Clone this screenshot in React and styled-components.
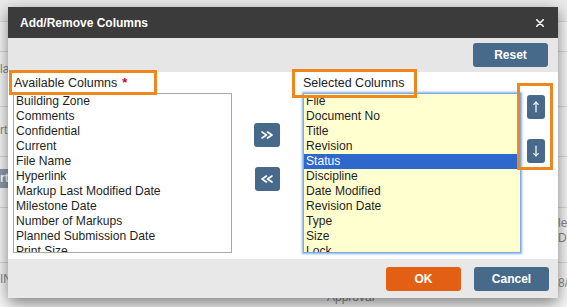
import React from 'react';
import styled, { createGlobalStyle } from 'styled-components';

const Global = createGlobalStyle`
  html, body { margin: 0; padding: 0; width: 567px; height: 307px; overflow: hidden; }
  body { font-family: "Liberation Sans", Arial, Helvetica, sans-serif; background: #f8f8f8; }
  * { box-sizing: border-box; }
`;

const Screen = styled.div`
  position: relative;
  width: 567px;
  height: 307px;
  overflow: hidden;
`;

/* ---------- background page (table behind the dialog) ---------- */
const BgRow = styled.div`
  display: grid;
  grid-template-columns: 300px 258px 1fr;
  height: ${p => p.$h}px;
  background: ${p => p.$bg || 'transparent'};
  border-bottom: ${p => (p.$line ? '1px solid #dadada' : 'none')};
  font-size: 12px;
  line-height: 15px;
  color: #8a8a8a;
  white-space: nowrap;
  overflow: hidden;
`;

const BgCell = styled.div`
  padding-top: ${p => p.$pt || 0}px;
  padding-left: ${p => p.$pl || 0}px;
  overflow: hidden;
`;

const BgBadge = styled.div`
  margin-top: 1px;
  height: 19px;
  width: 40px;
  background: #8d9cae;
  color: #fff;
  font-weight: bold;
  line-height: 19px;
`;

/* ---------- dialog ---------- */
const Modal = styled.div`
  position: absolute;
  left: 8px;
  top: 7px;
  width: 550px;
  box-shadow: 0 5px 15px rgba(0, 0, 0, 0.5);
  background: #fff;
`;

const Header = styled.div`
  height: 31px;
  background: #3b3b3b;
  display: flex;
  align-items: center;
  justify-content: space-between;
  padding: 0 14px 0 12px;
`;

const Title = styled.div`
  color: #fff;
  font-weight: bold;
  font-size: 12px;
`;

const Close = styled.div`
  width: 8px;
  height: 8px;
  display: flex;
`;

const Toolbar = styled.div`
  height: 34px;
  background: #e6e6e6;
  display: flex;
  justify-content: flex-end;
  padding: 5px 10px 0 0;
`;

const Btn = styled.div`
  width: 75px;
  height: 24px;
  border-radius: 3px;
  background: ${p => (p.$primary ? '#e35f13' : '#486a8a')};
  color: #fff;
  font-weight: bold;
  font-size: 12px;
  display: flex;
  align-items: center;
  justify-content: center;
`;

const Body = styled.div`
  height: 187px;
  display: flex;
  align-items: flex-start;
  padding-left: 5px;
  background: #fff;
`;

const Column = styled.div`
  width: ${p => p.$w}px;
  display: flex;
  flex-direction: column;
`;

const Label = styled.div`
  position: relative;
  height: 21px;
  line-height: 22px;
  font-size: 12.5px;
  color: #222;
  padding-left: 1px;
  white-space: nowrap;
`;

const Req = styled.span`
  color: #d0021b;
  font-weight: bold;
  font-size: 13px;
  margin-left: 5px;
`;

const Callout = styled.span`
  position: absolute;
  left: ${p => p.$l}px;
  top: ${p => p.$t}px;
  width: ${p => p.$w}px;
  height: ${p => p.$h}px;
  border: 3px solid #f0871e;
  z-index: 3;
  pointer-events: none;
`;

const ListBox = styled.div`
  height: 160px;
  width: ${p => p.$w}px;
  margin-left: ${p => p.$ml || 0}px;
  border: 1px solid ${p => (p.$focus ? '#80a9dc' : '#a9a9a9')};
  box-shadow: ${p => (p.$focus ? '0 0 2px 1px rgba(90, 150, 225, 0.75)' : 'none')};
  background: ${p => (p.$focus ? '#ffffcf' : '#fff')};
  overflow: hidden;
  padding-right: ${p => (p.$focus ? 3 : 0)}px;
`;

const Option = styled.div`
  height: 15px;
  line-height: 15px;
  font-size: 12.1px;
  padding-left: 2px;
  white-space: nowrap;
  color: ${p => (p.$sel ? '#fff' : '#1e1e1e')};
  background: ${p => (p.$sel ? '#2f68cd' : 'transparent')};
`;

const Mover = styled.div`
  width: 70px;
  padding-top: 51px;
  display: flex;
  flex-direction: column;
  align-items: center;
  gap: 20px;
`;

const SmallBtn = styled.div`
  width: ${p => p.$w}px;
  height: 24px;
  border-radius: 3px;
  background: #486a8a;
  display: flex;
  align-items: center;
  justify-content: center;
`;

const Order = styled.div`
  position: relative;
  margin-left: 5px;
  width: 18px;
  padding-top: 23px;
  display: flex;
  flex-direction: column;
  gap: 20px;
`;

const Footer = styled.div`
  height: 39px;
  background: #e8e8e8;
  display: flex;
  justify-content: flex-end;
  gap: 13px;
  padding: 8px 9px 0 0;
`;

const available = [
  'Building Zone', 'Comments', 'Confidential', 'Current', 'File Name', 'Hyperlink',
  'Markup Last Modified Date', 'Milestone Date', 'Number of Markups',
  'Planned Submission Date', 'Print Size',
];

const selected = [
  'File', 'Document No', 'Title', 'Revision', 'Status', 'Discipline', 'Date Modified',
  'Revision Date', 'Type', 'Size', 'Lock',
];

const Arrow = ({ down }) => (
  <svg width="8" height="12" viewBox="0 0 8 12">
    <g stroke="#fff" strokeWidth="1.2" fill="none" strokeLinecap="round" strokeLinejoin="round">
      <path d="M4 1.2v9.6" />
      {down ? <path d="M1.8 8.6L4 10.8l2.2-2.2" /> : <path d="M1.8 3.4L4 1.2l2.2 2.2" />}
    </g>
  </svg>
);

const Chevrons = ({ left }) => (
  <svg width="12" height="8" viewBox="0 0 12 8">
    <g stroke="#fff" strokeWidth="1.6" fill="none" strokeLinecap="round" strokeLinejoin="round">
      {left ? (
        <path d="M5.5 1L1 4l4.5 3M11 1L6.5 4 11 7" />
      ) : (
        <path d="M1 1l4.5 3L1 7M6.5 1L11 4 6.5 7" />
      )}
    </g>
  </svg>
);

export default function App() {
  return (
    <Screen>
      <Global />
      <BgRow $h={22} $bg="#ebebeb" $line />
      <BgRow $h={30} $line />
      <BgRow $h={55} $line>
        <BgCell $pt={10}>labels</BgCell>
      </BgRow>
      <BgRow $h={50} $line>
        <BgCell $pt={16}>rt</BgCell>
        <BgCell />
        <BgCell />
      </BgRow>
      <BgRow $h={11} />
      <BgRow $h={20}>
        <BgCell><BgBadge>rt</BgBadge></BgCell>
      </BgRow>
      <BgRow $h={20} $line />
      <BgRow $h={55} $line>
        <BgCell />
        <BgCell />
        <BgCell $pt={8}>le<br />Da</BgCell>
      </BgRow>
      <BgRow $h={45}>
        <BgCell $pt={9}>IN</BgCell>
        <BgCell $pt={27} $pl={27}>Approval</BgCell>
        <BgCell $pt={13}>8/</BgCell>
      </BgRow>

      <Modal>
        <Header>
          <Title>Add/Remove Columns</Title>
          <Close>
            <svg width="8" height="8" viewBox="0 0 8 8">
              <path d="M0.8 0.8L7.2 7.2M7.2 0.8L0.8 7.2" stroke="#fff" strokeWidth="1.6" strokeLinecap="round" />
            </svg>
          </Close>
        </Header>
        <Toolbar>
          <Btn>Reset</Btn>
        </Toolbar>
        <Body>
          <Column $w={219}>
            <Label>
              Available Columns<Req>*</Req>
              <Callout $l={-4} $t={-2} $w={148} $h={25} />
            </Label>
            <ListBox $w={219}>
              {available.map(a => (
                <Option key={a}>{a}</Option>
              ))}
            </ListBox>
          </Column>
          <Mover>
            <SmallBtn $w={26}><Chevrons /></SmallBtn>
            <SmallBtn $w={25}><Chevrons left /></SmallBtn>
          </Mover>
          <Column $w={220}>
            <Label>
              Selected Columns
              <Callout $l={-10} $t={-3} $w={125} $h={29} />
            </Label>
            <ListBox $w={218} $ml={1} $focus>
              {selected.map(s => (
                <Option key={s} $sel={s === 'Status'}>{s}</Option>
              ))}
            </ListBox>
          </Column>
          <Order>
            <SmallBtn $w={18}><Arrow /></SmallBtn>
            <SmallBtn $w={18}><Arrow down /></SmallBtn>
            <Callout $l={-10} $t={11} $w={36} $h={87} />
          </Order>
        </Body>
        <Footer>
          <Btn $primary>OK</Btn>
          <Btn>Cancel</Btn>
        </Footer>
      </Modal>
    </Screen>
  );
}
